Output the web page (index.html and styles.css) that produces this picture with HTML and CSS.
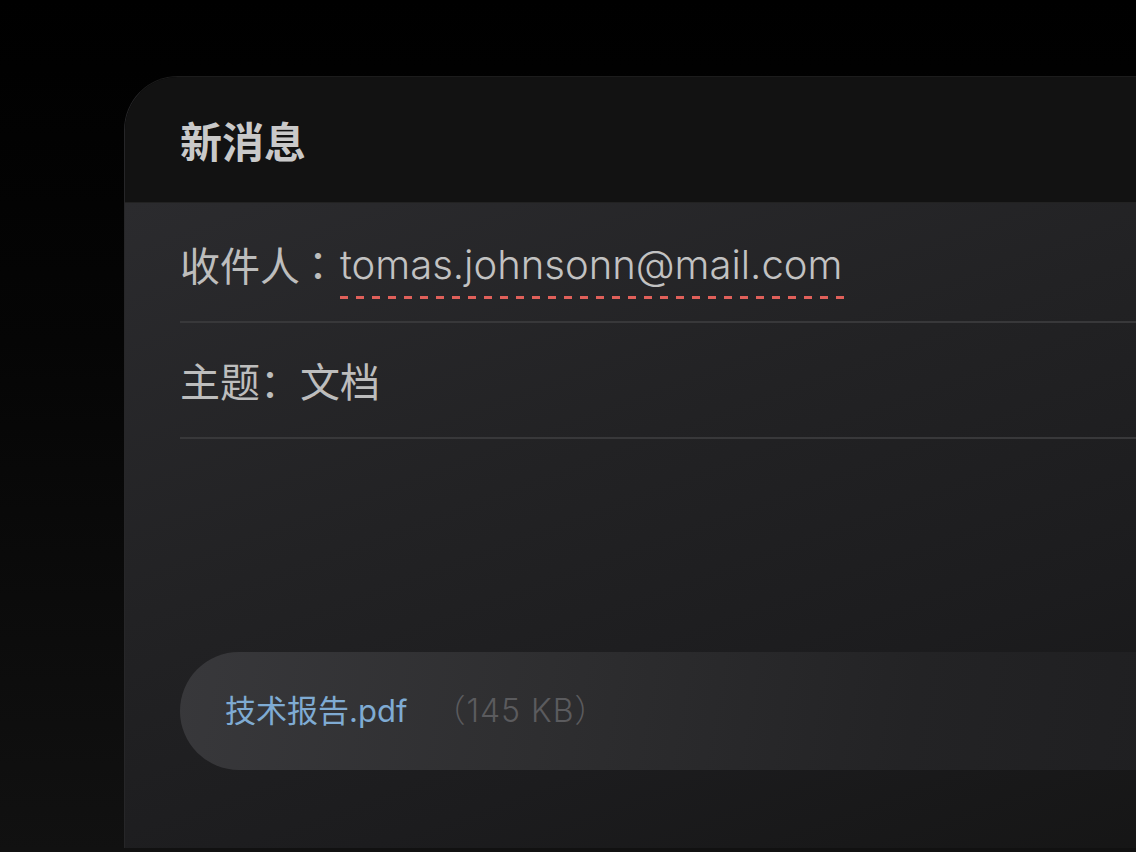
FILE: index.html
```html
<!DOCTYPE html>
<html lang="zh">
<head>
<meta charset="utf-8">
<title>新消息</title>
<link rel="stylesheet" href="styles.css">
</head>
<body>
<div class="page">
  <section class="card">
    <header class="card-head">
      <h1 class="title">新消息</h1>
    </header>
    <div class="card-body">
      <div class="field field-to">
        <span class="label">收件人<span class="colon-c">：</span></span><span class="value addr">tomas.johnsonn@mail.com</span>
      </div>
      <div class="field field-subject">
        <span class="label">主题：</span><span class="value">文档</span>
      </div>
      <div class="spacer"></div>
      <div class="attachment">
        <span class="file">技术报告.pdf</span>
        <span class="size">（145 KB）</span>
      </div>
    </div>
  </section>
</div>
</body>
</html>
```

FILE: styles.css
```css
html, body {
  margin: 0;
  padding: 0;
}
body {
  width: 1136px;
  height: 852px;
  overflow: hidden;
  background: linear-gradient(180deg, #000 0%, #050505 40%, #111 100%);
  font-family: "Inter", "Noto Sans CJK SC", sans-serif;
}
.page {
  padding: 76px 0 0 124px;
}
.card {
  width: 1100px;
  height: 772px;
  border-top-left-radius: 54px;
  overflow: hidden;
  display: flex;
  flex-direction: column;
  border-top: 1px solid #1c1c1c;
  border-left: 1px solid #262628;
  box-sizing: border-box;
}
.card-head {
  height: 125px;
  background: #121212;
  display: flex;
  align-items: center;
  padding-left: 55px;
  flex-shrink: 0;
}
.title {
  margin: 0;
  font-family: "Noto Sans CJK SC", sans-serif;
  font-weight: 700;
  font-size: 42px;
  color: #c9c9c9;
  letter-spacing: 0;
}
.card-body {
  flex: 1;
  background: linear-gradient(160deg, #2b2b2e 0%, #222224 40%, #1c1c1e 70%, #151515 100%);
  padding: 4px 0 0 55px;
  display: flex;
  flex-direction: column;
  border-top: 1px solid #222;
}
.field {
  display: flex;
  align-items: center;
  border-bottom: 2px solid #38383a;
  color: #bdbdbd;
  font-size: 40px;
  font-family: "Noto Sans CJK SC", sans-serif;
}
.field-to {
  height: 114px;
}
.field-subject {
  height: 114px;
}
.label {
  color: #bdbdbd;
}
.colon-c {
  font-family: "Noto Sans CJK TC", sans-serif;
  display: inline-block;
  width: 40px;
  text-align: center;
  position: relative;
  left: -2px;
}
.value {
  color: #bdbdbd;
}
.addr {
  font-family: "Inter", sans-serif;
  font-weight: 300;
  font-size: 40px;
  color: #c2c2c2;
  padding-bottom: 10px;
  padding-right: 4px;
  margin-top: 10px;
  background-image: linear-gradient(90deg, #e0605a 0 8px, transparent 8px 16px);
  background-size: 16px 3px;
  background-repeat: repeat-x;
  background-position: 0 100%;
}
.spacer {
  flex: 0 0 213px;
}
.attachment {
  height: 118px;
  border-radius: 59px 0 0 59px;
  background: linear-gradient(100deg, #38383b 0%, #2e2e30 35%, #232325 70%, #1e1e20 100%);
  display: flex;
  align-items: center;
  padding-left: 45px;
  padding-bottom: 6px;
  box-sizing: border-box;
  font-size: 31px;
  font-family: "Inter", "Noto Sans CJK SC", sans-serif;
}
.file {
  color: #7fabd3;
  font-weight: 400;
}
.size {
  color: #5b5b5e;
  margin-left: 26px;
  font-weight: 300;
  font-size: 32px;
  letter-spacing: 1px;
}
```
